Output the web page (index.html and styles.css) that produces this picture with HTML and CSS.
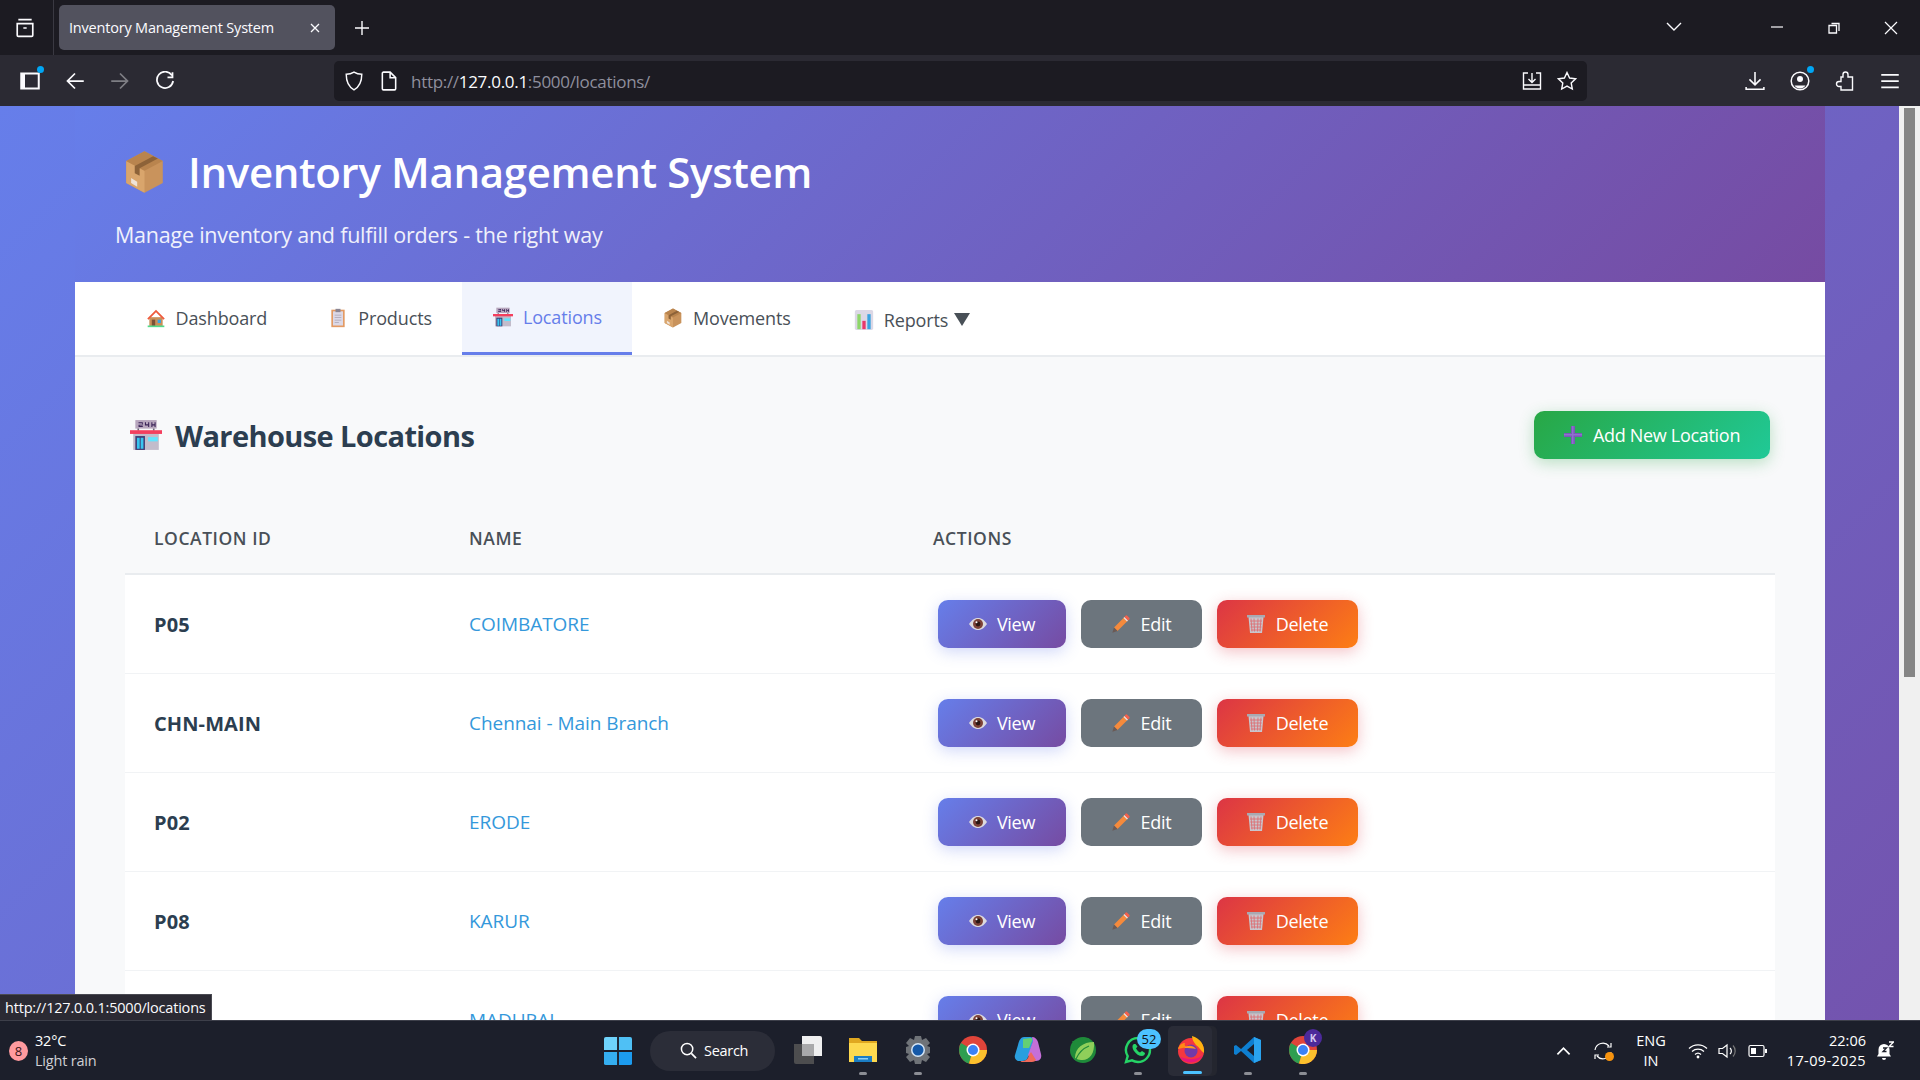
FILE: index.html
```html
<!DOCTYPE html>
<html lang="en">
<head>
    <meta charset="UTF-8">
    <meta name="viewport" content="width=device-width, initial-scale=1.0">
    <title>Inventory Management System</title>
    <link rel="stylesheet" href="styles.css">
</head>
<body>
    <svg class="defs" width="0" height="0">
        <symbol id="i-box" viewBox="0 0 32 36">
            <path d="M16 1 31 9v18L16 35 1 27V9z" fill="#c9935c"/>
            <path d="M16 17v18L1 27V9z" fill="#d9a56c"/>
            <path d="M16 1 31 9 16 17 1 9z" fill="#b9844e"/>
            <path d="M23 5 8 13v6l4 2v-6L27 7z" fill="#8d6238"/>
            <path d="M5 23l5 3v4l-5-3z" fill="#efe3d8"/>
        </symbol>
        <symbol id="i-house" viewBox="0 0 24 24">
            <path d="M4 11h16v11H4z" fill="#c98f58"/>
            <path d="M12 2 1.500 12.500 3 14l9-9 9 9 1.500-1.500z" fill="#ef5a3c"/>
            <path d="M7 14h4v8H7z" fill="#7a5136"/>
            <path d="M14 14h4v4h-4z" fill="#3aa3e0"/>
            <path d="M2 21h20v2H2z" fill="#52d98a"/>
        </symbol>
        <symbol id="i-clip" viewBox="0 0 24 24">
            <path d="M4 2h16v21H4z" fill="#e39a63"/>
            <path d="M6 4h12v17H6z" fill="#dcd8e6"/>
            <path d="M9 1h6v4H9z" fill="#8b8592"/>
            <path d="M8 8h8v1H8zM8 11h8v1H8zM8 14h8v1H8zM8 17h5v1H8z" fill="#a9a4b4"/>
        </symbol>
        <symbol id="i-store" viewBox="0 0 30 28">
            <path d="M5 0h20v8H5z" fill="#b7a6bd"/>
            <path d="M8 2h4v1H8zM11 3h1v1.500H8v2h4v-1H9V5h3zM14 2h1v2h2V2h1v4.500h-1V5h-3zM20 2h1v2h2V2h1v4.500h-1V5h-2v1.500h-1z" fill="#3b2458"/>
            <path d="M7 8h1.500v2H7zM21.500 8H23v2h-1.500z" fill="#6b6475"/>
            <path d="M3 12h24v16H3z" fill="#c2bccb"/>
            <path d="M0 9.500h30v3.500H0z" fill="#f43f5e"/>
            <path d="M5 15h9v13H5z" fill="#3f3a72"/>
            <path d="M6.500 16.500h2.600V27H6.500zM10 16.500h2.600V27H10z" fill="#37c5f0"/>
            <path d="M17 16h9v4h-9z" fill="#62e4ff"/>
        </symbol>
        <symbol id="i-chart" viewBox="0 0 24 24">
            <path d="M1 2a2 2 0 0 1 2-2h18a2 2 0 0 1 2 2v20a2 2 0 0 1-2 2H3a2 2 0 0 1-2-2z" fill="#dcd8e6"/>
            <path d="M4 5h4v18H4z" fill="#8ed66a"/>
            <path d="M10 13h4v10h-4z" fill="#e8386a"/>
            <path d="M16 5h4v18h-4z" fill="#3aa3e0"/>
        </symbol>
        <symbol id="i-eye" viewBox="0 0 18 12">
            <path d="M0 6C3 1.500 6 0 9 0s6 1.500 9 6c-3 4.500-6 6-9 6S3 10.500 0 6z" fill="#dcd9de"/>
            <circle cx="9" cy="6" r="5" fill="#7d4238"/>
            <circle cx="9" cy="6" r="2.400" fill="#2a1512"/>
            <circle cx="7.500" cy="4.300" r="1" fill="#fff"/>
        </symbol>
        <symbol id="i-pencil" viewBox="0 0 18 18">
            <path d="M12.500 2 16 5.500 5.500 16 2 12.500z" fill="#f58a3c"/>
            <path d="M11.500 3 15 6.500 16 5.500 12.500 2z" fill="#e5e3ea"/>
            <path d="M12.500 2 13.500.8a1.200 1.200 0 0 1 1.700 0l2 2a1.200 1.200 0 0 1 0 1.700L16 5.500z" fill="#f4604c"/>
            <path d="M2 12.500 5.500 16 .3 17.700z" fill="#6b5a55"/>
        </symbol>
        <symbol id="i-trash" viewBox="0 0 18 18">
            <path d="M1.500 2h15L15 18H3z" fill="#c9c5cc"/>
            <path d="M4 3.500l1 13M7 3.500l.5 13M11 3.500l-.5 13M14 3.500l-1 13M3 6h12M3.300 9h11.400M3.600 12h10.800M4 15h10" stroke="#dd6f74" stroke-width=".9" fill="none"/>
            <path d="M0 0h18v2.500H0z" fill="#a9a9b2"/>
        </symbol>
        <symbol id="i-plus" viewBox="0 0 18 18">
            <path d="M7 0h4v7h7v4h-7v7H7v-7H0V7h7z" fill="#7a57b8"/>
            <path d="M8 0h1.500v18H8zM0 8h18v1.500H0z" fill="#8f6fd0"/>
        </symbol>
        <symbol id="i-chrome" viewBox="0 0 28 28">
            <circle cx="14" cy="14" r="14" fill="#e0443a"/>
            <path d="M14 14 2 7A14 14 0 0 0 10 27.500z" fill="#2e9e50"/>
            <path d="M14 14h14a14 14 0 0 1-18 13.500z" fill="#fbc02d"/>
            <circle cx="14" cy="14" r="6.500" fill="#fff"/>
            <circle cx="14" cy="14" r="5" fill="#3b82f6"/>
        </symbol>
    </svg>

    <header class="tabstrip">
        <div class="strip-left">
            <svg class="chrome-icon" viewBox="0 0 18 18"><path d="M3 1.500h12M2 5h14v10.500a1 1 0 0 1-1 1H3a1 1 0 0 1-1-1zM7.500 9h3" fill="none" stroke="#fbfbfe" stroke-width="1.500"/></svg>
        </div>
        <div class="tab">
            <span class="tab-title">Inventory Management System</span>
            <svg class="tab-close" viewBox="0 0 10 10"><path d="M1 1l8 8M9 1 1 9" stroke="#fbfbfe" stroke-width="1.300"/></svg>
        </div>
        <svg class="chrome-icon new-tab" viewBox="0 0 16 16"><path d="M8 1v14M1 8h14" stroke="#fbfbfe" stroke-width="1.400"/></svg>
        <div class="strip-right">
            <svg class="chrome-icon caret" viewBox="0 0 16 10"><path d="M1 1l7 7 7-7" fill="none" stroke="#fbfbfe" stroke-width="1.400"/></svg>
            <div class="win-btns">
                <svg class="chrome-icon" viewBox="0 0 14 14"><path d="M1 6h12" stroke="#fbfbfe" stroke-width="1.200"/></svg>
                <svg class="chrome-icon" viewBox="0 0 14 14"><path d="M2 4.500h7.500V12H2zM4.500 2.500H12V10" fill="none" stroke="#fbfbfe" stroke-width="1.300"/></svg>
                <svg class="chrome-icon" viewBox="0 0 14 14"><path d="M1 1l12 12M13 1 1 13" stroke="#fbfbfe" stroke-width="1.200"/></svg>
            </div>
        </div>
    </header>

    <nav class="toolbar">
        <div class="tool-left">
            <span class="tool has-dot">
                <svg class="chrome-icon" viewBox="0 0 16 16"><path d="M1 2h14v12H1z" fill="none" stroke="#fbfbfe" stroke-width="1.600"/><path d="M1 2h3v12H1z" fill="#fbfbfe"/></svg>
            </span>
            <svg class="chrome-icon" viewBox="0 0 16 16"><path d="M15 8H2M8 2 2 8l6 6" fill="none" stroke="#fbfbfe" stroke-width="1.400"/></svg>
            <svg class="chrome-icon dim" viewBox="0 0 16 16"><path d="M1 8h13M8 2l6 6-6 6" fill="none" stroke="#fbfbfe" stroke-width="1.400"/></svg>
            <svg class="chrome-icon" viewBox="0 0 16 16"><path d="M13.500 3.500A6.500 6.500 0 1 0 14.500 8M14 1v4h-4" fill="none" stroke="#fbfbfe" stroke-width="1.400"/></svg>
        </div>
        <div class="urlbar">
            <svg class="chrome-icon" viewBox="0 0 16 18"><path d="M8 1c2 1.300 4.500 2 7 2 0 6-1.500 11-7 14C2.500 14 1 9 1 3c2.500 0 5-.7 7-2z" fill="none" stroke="#fbfbfe" stroke-width="1.300"/></svg>
            <svg class="chrome-icon doc-icon" viewBox="0 0 14 18"><path d="M2 1h6l5 5v10a1 1 0 0 1-1 1H2a1 1 0 0 1-1-1V2a1 1 0 0 1 1-1zM8 1v5h5" fill="none" stroke="#fbfbfe" stroke-width="1.400"/></svg>
            <span class="url">http://<b>127.0.0.1</b>:5000/locations/</span>
            <span class="url-end">
                <svg class="chrome-icon" viewBox="0 0 20 18"><path d="M6 1H1.500v16h17V1H14M1.500 13h17M10 1v9M6.500 7 10 10.500 13.500 7" fill="none" stroke="#fbfbfe" stroke-width="1.400"/></svg>
                <svg class="chrome-icon" viewBox="0 0 20 20"><path d="M10 1.500l2.600 5.500 6 .8-4.400 4.200 1.100 6L10 15.100 4.700 18l1.100-6L1.400 7.800l6-.8z" fill="none" stroke="#fbfbfe" stroke-width="1.400"/></svg>
            </span>
        </div>
        <div class="tool-right">
            <svg class="chrome-icon" viewBox="0 0 18 18"><path d="M9 1v11M4 7.500 9 12.500 14 7.500M1 14.500v2h16v-2" fill="none" stroke="#fbfbfe" stroke-width="1.400"/></svg>
            <span class="tool has-dot">
                <svg class="chrome-icon" viewBox="0 0 20 20"><circle cx="10" cy="10" r="8.800" fill="none" stroke="#fbfbfe" stroke-width="1.500"/><circle cx="10" cy="8" r="3" fill="#fbfbfe"/><path d="M4.500 14.500h11a6.500 6.500 0 0 1-11 0z" fill="#fbfbfe"/></svg>
            </span>
            <svg class="chrome-icon" viewBox="0 0 18 20"><path d="M7 6V3.500a2.500 2.500 0 0 1 5 0V6h4.500v13H5v-3.500H3a2.500 2.500 0 0 1 0-5h2V6z" fill="none" stroke="#fbfbfe" stroke-width="1.400"/></svg>
            <svg class="chrome-icon" viewBox="0 0 16 14"><path d="M1 2h14M1 7h14M1 12h14" stroke="#fbfbfe" stroke-width="1.400"/></svg>
        </div>
    </nav>

    <div class="viewport">
        <div class="page">
            <div class="container">
                <div class="banner">
                    <h1><svg class="emoji-title"><use href="#i-box"/></svg>Inventory Management System</h1>
                    <p>Manage inventory and fulfill orders - the right way</p>
                </div>
                <div class="tabs">
                    <a class="tab-link"><svg class="emoji"><use href="#i-house"/></svg>Dashboard</a>
                    <a class="tab-link"><svg class="emoji"><use href="#i-clip"/></svg>Products</a>
                    <a class="tab-link active"><svg class="emoji"><use href="#i-store"/></svg>Locations</a>
                    <a class="tab-link"><svg class="emoji"><use href="#i-box"/></svg>Movements</a>
                    <a class="tab-link reports"><svg class="emoji"><use href="#i-chart"/></svg>Reports <span class="arrow"></span></a>
                </div>
                <div class="content">
                    <div class="section-head">
                        <h2><svg class="emoji-h2"><use href="#i-store"/></svg>Warehouse Locations</h2>
                        <a class="btn-add"><svg class="emoji-btn"><use href="#i-plus"/></svg>Add New Location</a>
                    </div>
                    <table>
                        <thead>
                            <tr>
                                <th class="col-id">Location ID</th>
                                <th class="col-name">Name</th>
                                <th>Actions</th>
                            </tr>
                        </thead>
                        <tbody id="rows">
                            <tr>
                                <td class="loc-id">P05</td>
                                <td class="loc-name">COIMBATORE</td>
                                <td><div class="actions">
                                    <a class="btn btn-view"><svg class="emoji-eye"><use href="#i-eye"/></svg>View</a>
                                    <a class="btn btn-edit"><svg class="emoji-btn"><use href="#i-pencil"/></svg>Edit</a>
                                    <a class="btn btn-delete"><svg class="emoji-btn"><use href="#i-trash"/></svg>Delete</a>
                                </div></td>
                            </tr>
                            <tr>
                                <td class="loc-id">CHN-MAIN</td>
                                <td class="loc-name">Chennai - Main Branch</td>
                                <td><div class="actions">
                                    <a class="btn btn-view"><svg class="emoji-eye"><use href="#i-eye"/></svg>View</a>
                                    <a class="btn btn-edit"><svg class="emoji-btn"><use href="#i-pencil"/></svg>Edit</a>
                                    <a class="btn btn-delete"><svg class="emoji-btn"><use href="#i-trash"/></svg>Delete</a>
                                </div></td>
                            </tr>
                            <tr>
                                <td class="loc-id">P02</td>
                                <td class="loc-name">ERODE</td>
                                <td><div class="actions">
                                    <a class="btn btn-view"><svg class="emoji-eye"><use href="#i-eye"/></svg>View</a>
                                    <a class="btn btn-edit"><svg class="emoji-btn"><use href="#i-pencil"/></svg>Edit</a>
                                    <a class="btn btn-delete"><svg class="emoji-btn"><use href="#i-trash"/></svg>Delete</a>
                                </div></td>
                            </tr>
                            <tr>
                                <td class="loc-id">P08</td>
                                <td class="loc-name">KARUR</td>
                                <td><div class="actions">
                                    <a class="btn btn-view"><svg class="emoji-eye"><use href="#i-eye"/></svg>View</a>
                                    <a class="btn btn-edit"><svg class="emoji-btn"><use href="#i-pencil"/></svg>Edit</a>
                                    <a class="btn btn-delete"><svg class="emoji-btn"><use href="#i-trash"/></svg>Delete</a>
                                </div></td>
                            </tr>
                            <tr>
                                <td class="loc-id"></td>
                                <td class="loc-name">MADURAI</td>
                                <td><div class="actions">
                                    <a class="btn btn-view"><svg class="emoji-eye"><use href="#i-eye"/></svg>View</a>
                                    <a class="btn btn-edit"><svg class="emoji-btn"><use href="#i-pencil"/></svg>Edit</a>
                                    <a class="btn btn-delete"><svg class="emoji-btn"><use href="#i-trash"/></svg>Delete</a>
                                </div></td>
                            </tr>
                        </tbody>
                    </table>
                </div>
            </div>
        </div>
        <div class="scrollbar"><div class="thumb"></div></div>
        <div class="status-tip">http://127.0.0.1:5000/locations</div>
    </div>

    <footer class="taskbar">
        <div class="weather">
            <span class="alert-num">8</span>
            <div class="weather-text">
                <span>32°C</span>
                <span class="muted">Light rain</span>
            </div>
        </div>
        <div class="task-center">
            <svg class="task-icon win-logo" viewBox="0 0 30 30">
                <path d="M0 2a2 2 0 0 1 2-2h12v14H0z" fill="#6fd3fb"/><path d="M16 0h12a2 2 0 0 1 2 2v12H16z" fill="#4fc0f5"/>
                <path d="M0 16h14v14H2a2 2 0 0 1-2-2z" fill="#35aef0"/><path d="M16 16h14v12a2 2 0 0 1-2 2H16z" fill="#1c9bee"/>
            </svg>
            <div class="search-pill">
                <svg viewBox="0 0 18 18" class="search-glass"><circle cx="7.500" cy="7.500" r="6" fill="none" stroke="#fff" stroke-width="1.600"/><path d="M12 12l5 5" stroke="#fff" stroke-width="1.800"/></svg>
                Search
            </div>
            <span class="task-slot">
                <svg class="task-icon" viewBox="0 0 28 28"><path d="M0 8h20v20H2a2 2 0 0 1-2-2z" fill="#4d4d4f"/><path d="M8 0h18a2 2 0 0 1 2 2v18H8z" fill="#efeff0"/><path d="M8 8h12v12H8z" fill="#a9a9ab"/></svg>
            </span>
            <span class="task-slot running">
                <svg class="task-icon" viewBox="0 0 28 28"><path d="M0 2h10l3 3h15v21H0z" fill="#e0a820"/><path d="M0 7h28v19H0z" fill="#fdd94f"/><path d="M5 20h18v6H5z" fill="#1b7dc4"/><path d="M9 22h10v1.500H9z" fill="#8fd0f5"/></svg>
            </span>
            <span class="task-slot running">
                <svg class="task-icon" viewBox="0 0 28 28"><path d="M11 0h6l1 4 4-2 4 5-3 3 3 1v6l-3 1 3 3-4 5-4-2-1 4h-6l-1-4-4 2-4-5 3-3-3-1v-6l3-1-3-3 4-5 4 2z" fill="#6f7378"/><circle cx="14" cy="14" r="7" fill="#d5e6f7"/><circle cx="14" cy="14" r="5.500" fill="#1559a8"/></svg>
            </span>
            <span class="task-slot"><svg class="task-icon"><use href="#i-chrome"/></svg></span>
            <span class="task-slot">
                <svg class="task-icon" viewBox="0 0 28 28"><path d="M10 1h6c3 0 4 2 3 5l-5 15c-1 3-3 4-6 4H5c-3 0-5-3-4-6l3-10C5 4 7 1 10 1z" fill="#2a9fdf"/><path d="M9 3l8-1c1 0 2 1 1 3l-3 7H9z" fill="#63cf74"/><path d="M18 1c3 0 5 2 6 5l3 12c1 4-1 7-5 7h-5l-3-6 5-14z" fill="#c56fd8"/><path d="M7 26c-1 0 0-1 1-1 4 0 6-2 7-6l2-3 5 8c-1 1-2 2-4 2z" fill="#f0695a"/></svg>
            </span>
            <span class="task-slot">
                <svg class="task-icon" viewBox="0 0 28 28"><circle cx="14" cy="14" r="13" fill="#1f8a3a"/><path d="M3 5l2 3 2-4 2 2 2-4 2 2 2-3 2 3 3-2 1 4z" fill="#1f8a3a"/><path d="M6 22C6 12 14 6 25 6c1 12-5 19-13 18-2 0-4-1-6-2z" fill="#8fcf5a"/><path d="M7 23C10 16 15 12 20 10" stroke="#1f8a3a" stroke-width="1.200" fill="none"/></svg>
            </span>
            <span class="task-slot running badge-slot">
                <svg class="task-icon" viewBox="0 0 28 28"><path d="M14 2a12 12 0 0 1 0 24 12 12 0 0 1-6-1.600L2 26l1.700-5.800A12 12 0 0 1 14 2z" fill="none" stroke="#25d366" stroke-width="2.400"/><path d="M10 8c-2 1-2 4 0 7s5 5 8 5 3-3 3-3l-3-2-2 1.500c-2-1-3-2.500-4-4l1.500-2L11.500 8z" fill="#25d366"/></svg>
                <span class="count-badge">52</span>
            </span>
            <span class="task-slot current">
                <svg class="task-icon" viewBox="0 0 30 30"><circle cx="15" cy="16" r="13" fill="#f4373f"/><path d="M16 1c8 2 13 9 12 17-3-2-5-6-8-8-2-3-4-5-4-9z" fill="#ffb20f"/><path d="M2 14c1-4 4-6 7-6-1 2 0 3 2 4-3 1-6 1-9 2z" fill="#ff8a16"/><path d="M4 22C8 29 22 30 27 20c-5 5-14 5-23 2z" fill="#e5177b"/><circle cx="15" cy="16" r="6.500" fill="#7139a8"/><path d="M8 13c3-3 9-3 12 1-3-1-8-1-12-1z" fill="#ff9a1f"/></svg>
            </span>
            <span class="task-slot running">
                <svg class="task-icon" viewBox="0 0 28 28"><path d="M20 1l7 3v20l-7 3L7 15 2 19 0 18v-8l2-1 5 4z" fill="#0e7fd1"/><path d="M20 8l-7 6 7 6z" fill="#1c1f2b"/><path d="M20 1l7 3v20l-7 3z" fill="#2aa3ef"/></svg>
            </span>
            <span class="task-slot running badge-slot">
                <svg class="task-icon"><use href="#i-chrome"/></svg>
                <span class="k-badge">K</span>
            </span>
        </div>
        <div class="tray">
            <svg class="tray-icon chev" viewBox="0 0 16 10"><path d="M1.500 8.500 8 2l6.500 6.500" fill="none" stroke="#fff" stroke-width="1.800"/></svg>
            <span class="sync">
                <svg class="tray-icon" viewBox="0 0 20 20"><path d="M2 9a8 8 0 0 1 14-4M18 2v4h-4M18 11a8 8 0 0 1-14 4M2 18v-4h4" fill="none" stroke="#fff" stroke-width="1.200"/></svg>
                <span class="sync-dot"></span>
            </span>
            <div class="lang"><span>ENG</span><span>IN</span></div>
            <svg class="tray-icon" viewBox="0 0 20 16"><path d="M1 5.500a13 13 0 0 1 18 0M4 8.500a9 9 0 0 1 12 0M7 11.500a4.500 4.500 0 0 1 6 0" fill="none" stroke="#fff" stroke-width="1.300"/><circle cx="10" cy="14" r="1.400" fill="#fff"/></svg>
            <svg class="tray-icon" viewBox="0 0 20 16"><path d="M1 5.500h3.500L9 2v12l-4.500-3.500H1z" fill="none" stroke="#fff" stroke-width="1.200"/><path d="M12 5a4 4 0 0 1 0 6" fill="none" stroke="#fff" stroke-width="1.200"/><path d="M15 2.500a8 8 0 0 1 0 11" fill="none" stroke="#777" stroke-width="1.200"/></svg>
            <svg class="tray-icon" viewBox="0 0 20 12"><path d="M1 2a1.500 1.500 0 0 1 1.500-1.500h12A1.500 1.500 0 0 1 16 2v8a1.500 1.500 0 0 1-1.500 1.500h-12A1.500 1.500 0 0 1 1 10z" fill="none" stroke="#fff" stroke-width="1.200"/><path d="M3 3h5v6H3zM17 4h2v4h-2z" fill="#fff"/></svg>
            <div class="clock"><span>22:06</span><span class="date">17-09-2025</span></div>
            <svg class="tray-icon bell" viewBox="0 0 18 20"><path d="M8 3a5.500 5.500 0 0 0-5.500 5.500V13L1 15.500h14L13.500 13V8.500A5.500 5.500 0 0 0 8 3z" fill="#fff"/><path d="M6 17h4a2 2 0 0 1-4 0z" fill="#fff"/><path d="M13 1h4.500l-4.500 4.500h4.500M7 7h3.500L7 10.500h3.500" fill="none" stroke="#1c1f2b" stroke-width="1.300"/><path d="M13 1h4.500l-4.500 4.500h4.500" fill="none" stroke="#fff" stroke-width="1.300"/></svg>
        </div>
    </footer>
</body>
</html>
```

FILE: styles.css
```css
* {
    box-sizing: border-box;
}

html, body {
    margin: 0;
    height: 100%;
}

body {
    width: 1920px;
    height: 1080px;
    display: flex;
    flex-direction: column;
    overflow: hidden;
    font-family: "Open Sans", "Noto Sans", sans-serif;
    background-color: #1c1b22;
}

.defs {
    position: absolute;
}

.chrome-icon {
    width: 20px;
    height: 20px;
    flex: none;
}

.dim {
    opacity: 0.4;
}

/* browser tab strip */
.tabstrip {
    height: 55px;
    flex: none;
    display: flex;
    align-items: center;
    background-color: #1c1b22;
}

.strip-left {
    width: 54px;
    height: 55px;
    padding-left: 15px;
    display: flex;
    align-items: center;
    border-right: 1px solid #3a3942;
}

.tab {
    width: 276px;
    height: 45px;
    margin-left: 5px;
    padding: 0 15px 0 10px;
    display: flex;
    align-items: center;
    justify-content: space-between;
    background-color: #52525e;
    border-radius: 5px;
    color: #fbfbfe;
    font-size: 14.500px;
    letter-spacing: -0.2px;
}

.tab-close {
    width: 10px;
    height: 10px;
}

.new-tab {
    margin-left: 19px;
    width: 16px;
    height: 16px;
}

.strip-right {
    margin-left: auto;
    display: flex;
    align-items: center;
}

.caret {
    width: 16px;
    height: 10px;
    margin-top: -2px;
}

.win-btns {
    display: flex;
    gap: 43px;
    margin-left: 88px;
    padding-right: 22px;
}

.win-btns .chrome-icon {
    width: 14px;
    height: 14px;
}

/* browser toolbar */
.toolbar {
    height: 51px;
    flex: none;
    display: flex;
    align-items: center;
    background-color: #2b2a33;
}

.tool-left {
    width: 334px;
    padding-left: 20px;
    display: flex;
    align-items: center;
    gap: 25px;
}

.tool {
    position: relative;
    display: flex;
}

.has-dot::after {
    content: "";
    position: absolute;
    top: -5px;
    right: -4px;
    width: 7px;
    height: 7px;
    border-radius: 50%;
    background-color: #00a6f4;
}

.urlbar {
    width: 1253px;
    height: 40px;
    padding: 0 10px;
    display: flex;
    align-items: center;
    background-color: #1c1b22;
    border-radius: 5px;
}

.doc-icon {
    margin-left: 15px;
}

.url {
    margin-left: 12px;
    padding-top: 1px;
    color: #8f8f9d;
    font-size: 17px;
    letter-spacing: -0.3px;
}

.url b {
    font-weight: 400;
    color: #fbfbfe;
}

.url-end {
    margin-left: auto;
    display: flex;
    gap: 15px;
}

.tool-right {
    flex: 1;
    padding-right: 20px;
    display: flex;
    align-items: center;
    justify-content: flex-end;
    gap: 25px;
}

/* page area */
.viewport {
    position: relative;
    flex: 1;
    overflow: hidden;
    display: flex;
}

.page {
    flex: 1;
    padding: 0 95px 0 75px;
    background: linear-gradient(135deg, #667eea 0%, #764ba2 100%) 0 0 / 100% 1465px no-repeat;
}

.container {
    width: 1750px;
    background-color: #f8f9fa;
}

.banner {
    height: 176px;
    padding: 37px 40px 0;
    color: #fff;
    background: linear-gradient(135deg, #667eea 0%, #764ba2 100%);
}

.banner h1 {
    margin: 0;
    display: flex;
    align-items: center;
    font-size: 42px;
    line-height: 58px;
    font-weight: 600;
    letter-spacing: -0.35px;
}

.emoji-title {
    width: 39px;
    height: 44px;
    margin: 0 24px 0 10px;
}

.banner p {
    margin: 19px 0 0 0;
    font-size: 21.500px;
    line-height: 30px;
    letter-spacing: -0.23px;
    opacity: 0.9;
}

.tabs {
    height: 75px;
    padding-left: 40px;
    display: flex;
    background-color: #fff;
    border-bottom: 2px solid #e9ecef;
}

.tab-link {
    height: 73px;
    padding: 0 30.500px 1px;
    display: flex;
    align-items: center;
    color: #495057;
    font-size: 18px;
    letter-spacing: -0.13px;
}

.tab-link.active {
    padding-bottom: 0;
    color: #667eea;
    background-color: #f1f4fd;
    border-bottom: 3px solid #667eea;
}

.emoji {
    width: 20px;
    height: 20px;
    margin-right: 10px;
}

.reports {
    margin-left: 2px;
    padding-top: 2px;
    padding-bottom: 0;
}

.arrow {
    width: 0;
    height: 0;
    margin-left: 6px;
    border-left: 8px solid transparent;
    border-right: 8px solid transparent;
    border-top: 13px solid #495057;
}

.content {
    padding: 54px 50px 0;
}

.section-head {
    display: flex;
    justify-content: space-between;
    align-items: center;
    height: 48px;
    margin-bottom: 41px;
}

.section-head h2 {
    margin: 0;
    display: flex;
    align-items: center;
    color: #2c3e50;
    font-size: 29px;
    font-weight: 700;
    letter-spacing: -0.6px;
}

.emoji-h2 {
    width: 32px;
    height: 30px;
    margin-right: 13px;
    margin-left: 5px;
}

.btn-add {
    width: 236px;
    height: 48px;
    margin-right: 5px;
    display: flex;
    align-items: center;
    justify-content: center;
    color: #fff;
    font-size: 18px;
    letter-spacing: -0.3px;
    border-radius: 10px;
    background: linear-gradient(135deg, #28a745, #20c997);
    box-shadow: 0 4px 15px rgba(40, 167, 69, 0.3);
}

table {
    width: 1650px;
    border-collapse: collapse;
    background-color: #fff;
}

th {
    height: 74px;
    padding: 2px 29px 0;
    text-align: left;
    color: #495057;
    font-size: 17.500px;
    font-weight: 600;
    text-transform: uppercase;
    letter-spacing: 0.55px;
    background-color: #f8f9fa;
    border-bottom: 2px solid #e9ecef;
}

td {
    height: 99px;
    padding: 0 29px;
    font-size: 19px;
    letter-spacing: -0.1px;
    border-bottom: 1px solid #f1f3f5;
}

.col-id {
    width: 315px;
}

.col-name {
    width: 464px;
}

.loc-id {
    padding-top: 2px;
    color: #2c3e50;
    font-size: 20px;
    font-weight: 700;
    letter-spacing: 0.1px;
}

.loc-name {
    padding-top: 1px;
    color: #3498db;
    letter-spacing: -0.05px;
}

.actions {
    display: flex;
    gap: 15px;
    padding-left: 5px;
}

.btn {
    height: 48px;
    display: flex;
    align-items: center;
    justify-content: center;
    color: #fff;
    font-size: 18px;
    letter-spacing: -0.3px;
    border-radius: 10px;
}

.btn-view {
    width: 128px;
    background: linear-gradient(135deg, #667eea, #764ba2);
    box-shadow: 0 4px 15px rgba(102, 126, 234, 0.3);
}

.btn-edit {
    width: 121px;
    background-color: #6c757d;
}

.btn-delete {
    width: 141px;
    background: linear-gradient(135deg, #dc3545, #fd7e14);
    box-shadow: 0 4px 15px rgba(220, 53, 69, 0.3);
}

.emoji-btn {
    width: 18px;
    height: 18px;
    margin-right: 11px;
}

.emoji-eye {
    width: 18px;
    height: 12px;
    margin-right: 10px;
}

.scrollbar {
    position: absolute;
    top: 0;
    right: 0;
    bottom: 0;
    width: 21px;
    padding: 2px 5px 0;
    background-color: #f0f0f0;
}

.thumb {
    width: 11px;
    height: 569px;
    background-color: #858585;
}

.status-tip {
    position: absolute;
    left: 0;
    bottom: 0;
    height: 26px;
    padding: 0 5px;
    display: flex;
    align-items: center;
    color: #fbfbfe;
    font-size: 14.500px;
    letter-spacing: -0.2px;
    background-color: #2b2a33;
    border: 1px solid #4a4a52;
    border-left: 0;
    border-bottom: 0;
}

/* windows taskbar */
.taskbar {
    position: relative;
    height: 60px;
    flex: none;
    display: flex;
    align-items: center;
    background-color: #1c1f2b;
    border-top: 1px solid #3d3f4a;
    color: #fff;
}

.weather {
    display: flex;
    align-items: center;
    padding-left: 9px;
    gap: 7px;
}

.alert-num {
    width: 19px;
    height: 20px;
    display: flex;
    align-items: center;
    justify-content: center;
    color: #3a1518;
    font-size: 13px;
    border-radius: 50%;
    background-color: #ff9a9e;
}

.weather-text {
    display: flex;
    flex-direction: column;
    font-size: 14.500px;
    line-height: 20px;
    letter-spacing: -0.2px;
}

.muted {
    color: #cfd0d4;
}

.task-center {
    position: absolute;
    left: 604px;
    top: 0;
    height: 59px;
    display: flex;
    align-items: center;
}

.win-logo {
    width: 29px;
    height: 29px;
    margin-right: 18px;
}

.search-pill {
    width: 125px;
    height: 40px;
    margin-right: 5px;
    padding-left: 30px;
    display: flex;
    align-items: center;
    gap: 7px;
    font-size: 14.500px;
    letter-spacing: -0.3px;
    background-color: #2b2d38;
    border-radius: 20px;
}

.search-glass {
    width: 17px;
    height: 17px;
}

.task-slot {
    position: relative;
    width: 55px;
    height: 50px;
    display: flex;
    align-items: center;
    justify-content: center;
    padding-bottom: 2px;
}

.task-icon {
    position: relative;
    width: 28px;
    height: 28px;
}

.running::after {
    content: "";
    position: absolute;
    left: 24px;
    bottom: 1px;
    width: 8px;
    height: 3px;
    border-radius: 2px;
    background-color: #8b8d94;
}

.current::before {
    content: "";
    position: absolute;
    top: 0;
    left: 3px;
    width: 44px;
    height: 50px;
    background-color: #2a2c37;
    border-radius: 5px;
    box-shadow: 5px 0 0 #24262f;
}

.current::after {
    content: "";
    position: absolute;
    left: 18px;
    bottom: 2px;
    width: 19px;
    height: 3px;
    border-radius: 2px;
    background-color: #4cc2ff;
}

.current .task-icon {
    width: 30px;
    height: 30px;
    margin-left: -3px;
}

.count-badge {
    position: absolute;
    top: 3px;
    right: 4px;
    width: 24px;
    height: 20px;
    display: flex;
    align-items: center;
    justify-content: center;
    color: #111;
    font-size: 13px;
    background-color: #4cc2ff;
    border-radius: 10px;
}

.k-badge {
    position: absolute;
    top: 3px;
    right: 8px;
    width: 18px;
    height: 18px;
    display: flex;
    align-items: center;
    justify-content: center;
    color: #d5c8ef;
    font-size: 10px;
    font-weight: 700;
    background-color: #4c2a9a;
    border-radius: 50%;
}

.tray {
    margin-left: auto;
    padding-right: 26px;
    display: flex;
    align-items: center;
}

.tray-icon {
    width: 20px;
    height: 16px;
    flex: none;
}

.sync {
    position: relative;
    display: flex;
    margin-right: 23px;
}

.sync .tray-icon {
    height: 20px;
}

.sync-dot {
    position: absolute;
    right: -1px;
    bottom: 0;
    width: 9px;
    height: 9px;
    border-radius: 50%;
    background-color: #f7930e;
}

.lang {
    width: 30px;
    display: flex;
    flex-direction: column;
    align-items: center;
    margin-right: 22px;
    font-size: 14.500px;
    line-height: 20px;
}

.tray > .tray-icon {
    margin-right: 10px;
}

.tray > .chev {
    width: 15px;
    height: 10px;
    margin-right: 22px;
}

.clock {
    width: 84px;
    margin-left: 4px;
    display: flex;
    flex-direction: column;
    align-items: flex-end;
    font-size: 14.500px;
    line-height: 20px;
    white-space: nowrap;
}

.date {
    letter-spacing: 0.35px;
}

.tray > .bell {
    width: 18px;
    height: 20px;
    margin-left: 10px;
    margin-right: 0;
}
```
